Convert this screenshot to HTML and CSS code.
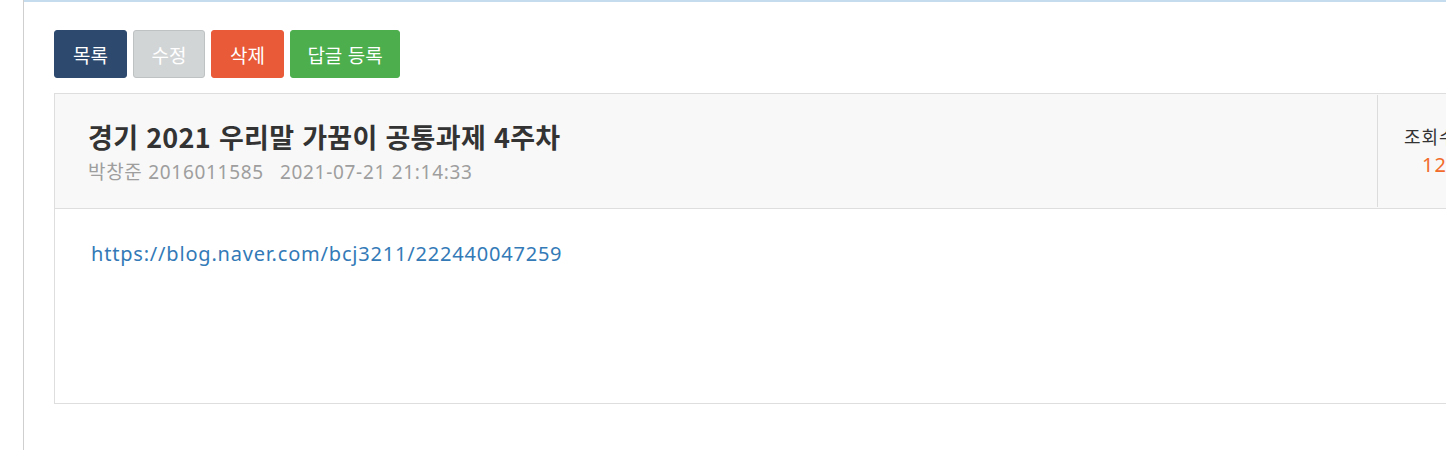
FILE: index.html
```html
<!DOCTYPE html>
<html lang="ko">
<head>
<meta charset="utf-8">
<title>게시글 보기</title>
<link rel="stylesheet" href="styles.css">
</head>
<body>
<div class="page">
  <div class="content">
    <div class="actions">
      <button class="btn btn-list">목록</button>
      <button class="btn btn-edit">수정</button>
      <button class="btn btn-delete">삭제</button>
      <button class="btn btn-reply">답글 등록</button>
    </div>
    <div class="post">
      <div class="post-head">
        <div class="post-info">
          <h1 class="post-title">경기 2021 우리말 가꿈이 공통과제 4주차</h1>
          <div class="post-meta"><span class="author">박창준 2016011585</span><span class="date">2021-07-21 21:14:33</span></div>
        </div>
        <div class="post-views">
          <div class="views-label">조회수</div>
          <div class="views-count">126</div>
        </div>
      </div>
      <div class="post-body">
        <a class="post-link" href="#">https://blog.naver.com/bcj3211/222440047259</a>
      </div>
    </div>
  </div>
</div>
</body>
</html>
```
FILE: styles.css
```css
html, body {
  margin: 0;
  padding: 0;
  background: #fff;
  overflow: hidden;
}
body {
  font-family: "Noto Sans", "Noto Sans CJK KR", sans-serif;
  color: #333;
  width: 1446px;
  height: 450px;
}
.page {
  margin-left: 23px;
  border-left: 1px solid #cfcfcf;
  height: 450px;
  width: 1600px;
}
.content {
  border-top: 2px solid #c5dcef;
  padding: 28px 0 0 30px;
}
.actions {
  display: flex;
  gap: 6px;
  margin-bottom: 15px;
}
.btn {
  height: 48px;
  padding: 0;
  border: 1px solid transparent;
  border-radius: 3px;
  font-family: "Noto Sans CJK KR", sans-serif;
  font-size: 19px;
  color: #fff;
  cursor: pointer;
}
.btn-list { background: #2d4a6e; border-color: #2d4a6e; width: 73px; }
.btn-edit { background: #d2d5d6; border-color: #bfc2c3; width: 72px; }
.btn-delete { background: #e85a38; border-color: #e85a38; width: 73px; }
.btn-reply { background: #4cae4c; border-color: #4cae4c; width: 110px; }
.post {
  border: 1px solid #dedede;
  width: 1500px;
}
.post-head {
  display: flex;
  background: #f8f8f8;
  border-bottom: 1px solid #dedede;
  height: 114px;
}
.post-info {
  width: 1322px;
  padding: 25px 0 0 33px;
  box-sizing: border-box;
}
.post-title {
  margin: 0;
  font-family: "Noto Sans CJK KR", sans-serif;
  font-size: 27px;
  font-weight: 700;
  letter-spacing: 0.3px;
  line-height: 36px;
  color: #333;
}
.post-meta {
  display: flex;
  gap: 16px;
  margin-top: 3px;
  font-size: 19px;
  letter-spacing: 0.7px;
  line-height: 28px;
  color: #9e9e9e;
}
.post-views {
  flex: none;
  width: 150px;
  margin: 1px 0;
  border-left: 1px solid #dcdcdc;
  padding: 28px 0 0 26px;
  font-size: 18px;
  line-height: 28px;
  white-space: nowrap;
}
.views-label { color: #333; letter-spacing: 1px; }
.views-count { color: #f26b2b; padding-left: 18px; font-size: 20px; letter-spacing: 1px; }
.post-body {
  height: 194px;
  padding: 31px 0 0 36px;
  box-sizing: border-box;
}
.post-link {
  color: #337ab7;
  text-decoration: none;
  font-size: 20px;
  letter-spacing: 0.8px;
}
```
